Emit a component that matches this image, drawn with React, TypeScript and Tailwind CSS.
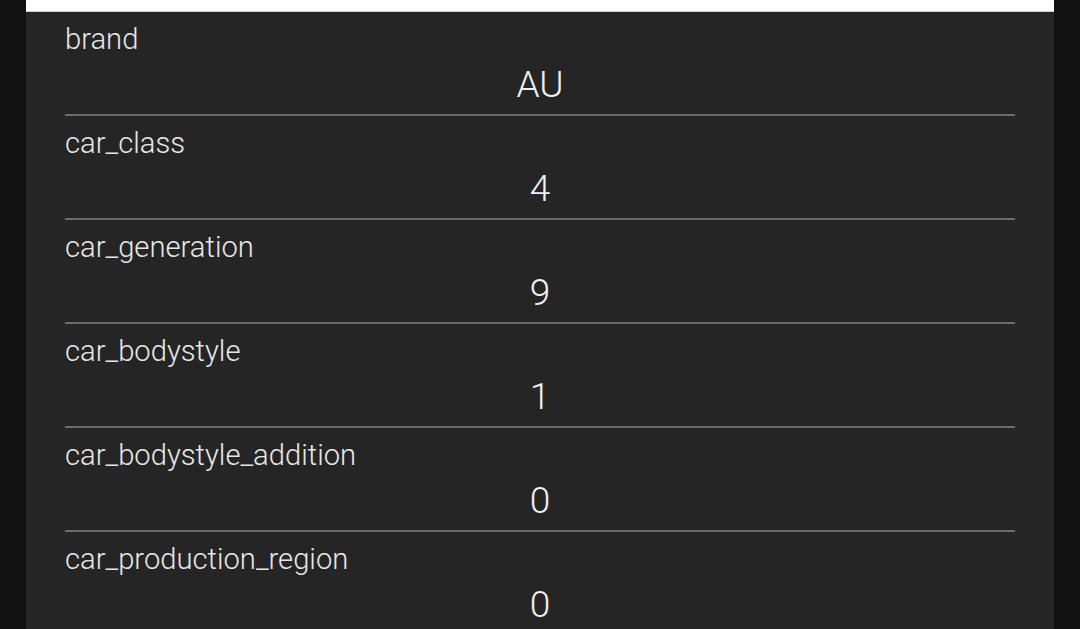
const rows = [
  { label: "brand", value: "AU" },
  { label: "car_class", value: "4" },
  { label: "car_generation", value: "9" },
  { label: "car_bodystyle", value: "1" },
  { label: "car_bodystyle_addition", value: "0" },
  { label: "car_production_region", value: "0" },
];

export default function App() {
  return (
    <div className="h-[629px] w-[1080px] overflow-hidden bg-[#111111] px-[26px] font-['Roboto',sans-serif]">
      <div className="h-full bg-[#252525]">
        {/* end of previous card */}
        <div className="h-[12px] border-b border-[#cfcfcf] bg-white" />

        <div className="px-[39px]">
          {rows.map((row) => (
            <div key={row.label} className="h-[104px] border-b-2 border-[#6a6a6a] pt-[11px]">
              <div className="text-[29.2px] leading-[32px] font-light text-[#e8e8e8]">{row.label}</div>
              <div className="mt-[9px] text-center text-[37px] leading-[42px] font-light text-[#f0f0f0]">
                {row.value}
              </div>
            </div>
          ))}
        </div>
      </div>
    </div>
  );
}
